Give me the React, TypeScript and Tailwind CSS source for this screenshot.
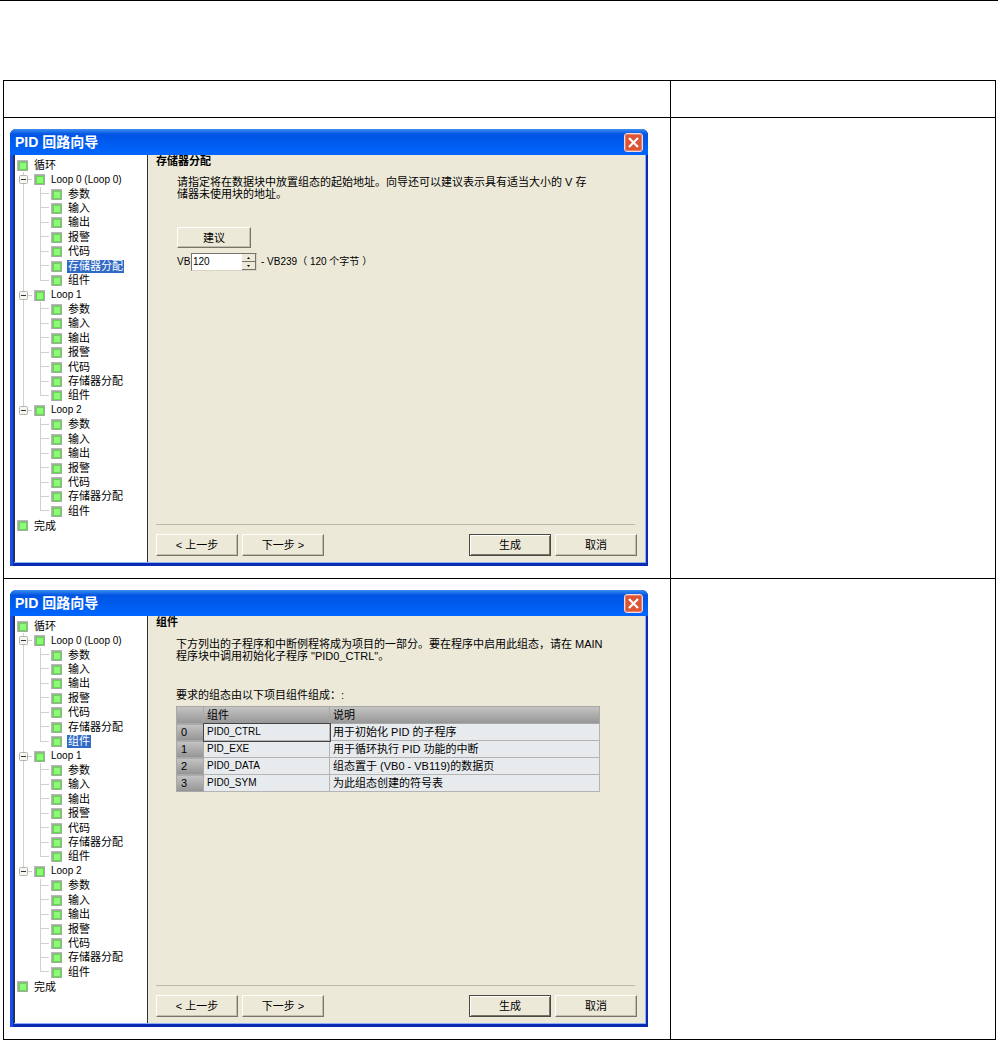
import { useState, type ReactNode } from 'react';
import clsx from 'clsx';

const LOOPS = ['Loop 0 (Loop 0)', 'Loop 1', 'Loop 2'];
const STEPS = ['参数', '输入', '输出', '报警', '代码', '存储器分配', '组件'];

const COMPONENTS = [
  { name: 'PID0_CTRL', text: '用于初始化 PID 的子程序' },
  { name: 'PID_EXE', text: '用于循环执行 PID 功能的中断' },
  { name: 'PID0_DATA', text: '组态置于 (VB0 - VB119)的数据页' },
  { name: 'PID0_SYM', text: '为此组态创建的符号表' },
];

function StatusIcon() {
  return (
    <span className="flex w-[17px] shrink-0 items-center pl-[2px]">
      <svg width="11" height="11" viewBox="0 0 11 11" aria-hidden="true">
        <rect width="11" height="11" fill="#b4bab4" />
        <rect x="1" y="1" width="10" height="10" fill="#a0aca0" />
        <rect x="2" y="2" width="8" height="8" fill="#5fdc48" />
        <rect x="3" y="3" width="6" height="6" fill="#8dfb78" />
      </svg>
    </span>
  );
}

// Expand box with the trunk line running through it
function ExpandBox({ last }: { last: boolean }) {
  return (
    <span className="flex w-[17px] shrink-0 items-center self-stretch pl-[4px]">
      <span className="flex h-full w-[9px] flex-col items-center">
        <span className="w-px flex-1 bg-[#d0d0d0]" />
        <button type="button" aria-label="折叠" className="block size-[9px]">
          <svg width="9" height="9" viewBox="0 0 9 9">
            <rect x="0.5" y="0.5" width="8" height="8" rx="1" fill="#f6f5f0" stroke="#b4b4ac" />
            <path d="M2 4.5h5" stroke="#333" />
          </svg>
        </button>
        <span className={clsx('w-px flex-1', !last && 'bg-[#d0d0d0]')} />
      </span>
      <span className="h-px flex-1 bg-[#d0d0d0]" />
    </span>
  );
}

function Trunk({ visible }: { visible: boolean }) {
  return (
    <span className="w-[17px] shrink-0 self-stretch">
      <span className={clsx('block h-full w-[9px]', visible && 'border-r border-[#d0d0d0]')} />
    </span>
  );
}

function Branch({ last }: { last: boolean }) {
  return (
    <span className="flex w-[17px] shrink-0 self-stretch">
      <span className={clsx('w-[9px] border-r border-[#d0d0d0]', last ? 'h-1/2' : 'h-full')} />
      <span className="h-1/2 flex-1 border-b border-[#d0d0d0]" />
    </span>
  );
}

function Tree({ selected }: { selected: string }) {
  return (
    <nav className="w-[134px] shrink-0 border-x border-[#333] bg-white pt-[3px] pb-[29px]">
      <ul className="grid h-[375px] auto-rows-fr">
        <li className="flex items-center">
          <StatusIcon />
          <span className="pl-[2px]">循环</span>
        </li>
        {LOOPS.map((loop, i) => {
          const lastLoop = i === LOOPS.length - 1;
          return [
            <li key={loop} className="flex items-center">
              <ExpandBox last={lastLoop} />
              <StatusIcon />
              <span className="pl-[2px] text-[10px] whitespace-nowrap">{loop}</span>
            </li>,
            ...STEPS.map((step, j) => (
              <li key={`${loop}-${step}`} className="flex items-center">
                <Trunk visible={!lastLoop} />
                <Branch last={j === STEPS.length - 1} />
                <StatusIcon />
                <span
                  className={clsx(
                    'ml-px px-px leading-[13px]',
                    i === 0 && step === selected && 'bg-[#316ac5] text-white',
                  )}
                >
                  {step}
                </span>
              </li>
            )),
          ];
        })}
        <li className="flex items-center">
          <StatusIcon />
          <span className="pl-[2px]">完成</span>
        </li>
      </ul>
    </nav>
  );
}

function Button({ children, primary, className }: { children: ReactNode; primary?: boolean; className?: string }) {
  return (
    <button
      type="button"
      className={clsx(
        'flex items-center justify-center border bg-[#ece9d8]',
        primary
          ? 'border-[#4a4a42] shadow-[inset_1px_1px_#fff,inset_-1px_-1px_#77756a]'
          : 'border-t-[#fffef8] border-r-[#77756a] border-b-[#77756a] border-l-[#fffef8] shadow-[inset_-1px_-1px_#c2bfae]',
        className ?? 'h-[22px] w-[82px]',
      )}
    >
      {children}
    </button>
  );
}

function Wizard({ selected, children }: { selected: string; children: ReactNode }) {
  return (
    <section className="w-full overflow-hidden rounded-t-[6px] bg-[#0a2bb4] text-[11px] leading-[12px]">
      <header className="flex h-[26px] items-center justify-between bg-linear-to-b from-[#3c8cf0] from-0% via-[#0054e3] via-20% to-[#0066ff] pr-[5px] pl-[5px]">
        <h2 className="text-[14px] leading-[18px] font-bold text-white">PID 回路向导</h2>
        <button type="button" aria-label="关闭" className="block size-[19px]">
          <svg width="19" height="19" viewBox="0 0 19 19">
            <rect x="0.5" y="0.5" width="18" height="18" rx="2.5" fill="#dc5534" stroke="#f4d8dc" />
            <rect x="1.5" y="1.5" width="16" height="16" rx="2" fill="none" stroke="#ea8468" />
            <path d="M5 5l9 9M14 5l-9 9" stroke="#fff" strokeWidth="2.2" />
          </svg>
        </button>
      </header>
      <div className="border-l-[3px] border-[#1650dc] pr-[2px] pb-[3px] pl-px">
        <div className="flex border-r border-b border-[#8fb0f4] bg-[#ece9d8]">
          <Tree selected={selected} />
          <div className="flex min-w-0 flex-1 flex-col px-[8px] pb-[6px]">
            <div className="flex-1">{children}</div>
            <div className="mr-[2px] border-t border-[#bdbaa9] shadow-[inset_0_1px_#fff]" />
            <footer className="flex gap-1 pt-[9px]">
              <Button>&lt; 上一步</Button>
              <Button>下一步 &gt;</Button>
              <div className="flex-1" />
              <Button primary>生成</Button>
              <Button>取消</Button>
            </footer>
          </div>
        </div>
      </div>
    </section>
  );
}

function MemoryPage() {
  const [start, setStart] = useState('120');

  return (
    <>
      <h3 className="font-bold">存储器分配</h3>
      <div className="pt-[9px] pl-[21px]">
        <p className="whitespace-nowrap">
          请指定将在数据块中放置组态的起始地址。向导还可以建议表示具有适当大小的 V 存
          <br />
          储器未使用块的地址。
        </p>
        <Button className="mt-[27px] h-[21px] w-[74px]">建议</Button>
        <div className="mt-[5px] flex items-center text-[10px]">
          <label htmlFor="start-address" className="w-[14px]">VB</label>
          <span className="flex h-[18px] w-[66px] border border-t-[#77756a] border-r-[#d8d5c4] border-b-[#d8d5c4] border-l-[#77756a] bg-white">
            <input
              id="start-address"
              value={start}
              onChange={(e) => setStart(e.target.value)}
              className="min-w-0 flex-1 px-px outline-none"
            />
            <span className="flex w-[14px] flex-col">
              <button
                type="button"
                aria-label="增加"
                onClick={() => setStart(String(Number(start) + 1))}
                className="flex flex-1 items-center justify-center border-r border-b border-[#77756a] bg-[#ece9d8]"
              >
                <svg width="3" height="2" viewBox="0 0 3 2"><path d="M0 2L1.5 0L3 2z" /></svg>
              </button>
              <button
                type="button"
                aria-label="减少"
                onClick={() => setStart(String(Number(start) - 1))}
                className="flex flex-1 items-center justify-center border-r border-b border-[#77756a] bg-[#ece9d8]"
              >
                <svg width="3" height="2" viewBox="0 0 3 2"><path d="M0 0L1.5 2L3 0z" /></svg>
              </button>
            </span>
          </span>
          <span className="pl-1 whitespace-nowrap">- VB239（ 120 个字节 ）</span>
        </div>
      </div>
    </>
  );
}

function ComponentsPage() {
  return (
    <>
      <h3 className="font-bold">组件</h3>
      <div className="pt-[10px] pl-[20px]">
        <p className="whitespace-nowrap">
          下方列出的子程序和中断例程将成为项目的一部分。要在程序中启用此组态，请在 MAIN
          <br />
          程序块中调用初始化子程序 "PID0_CTRL"。
        </p>
        <p className="mt-[27px]">要求的组态由以下项目组件组成：:</p>
        <table className="mt-[5px] w-[424px] table-fixed border-collapse text-left leading-[16px]">
          <thead>
            <tr className="bg-linear-to-b from-[#c4c4c4] to-[#949494]">
              <th className="w-[27px] border border-[#a8a8a8]" aria-label="序号" />
              <th className="w-[126px] border border-[#a8a8a8] px-[3px] font-normal">组件</th>
              <th className="border border-[#a8a8a8] px-[3px] font-normal">说明</th>
            </tr>
          </thead>
          <tbody>
            {COMPONENTS.map((item, i) => (
              <tr key={item.name}>
                <th className="border border-[#a8a8a8] bg-linear-to-b from-[#c4c4c4] to-[#949494] px-[4px] font-normal">
                  {i}
                </th>
                <td
                  className={clsx(
                    'border border-[#b4b4b4] bg-[#e8ebee] px-[3px] text-[10px]',
                    i === 0 && 'outline outline-[#444]',
                  )}
                >
                  {item.name}
                </td>
                <td className="border border-[#b4b4b4] bg-[#e8ebee] px-[3px]">{item.text}</td>
              </tr>
            ))}
          </tbody>
        </table>
      </div>
    </>
  );
}

function App() {
  return (
    <main className="border-t border-black bg-white pt-[79px] pr-[2px] pl-[3px] font-['Liberation_Sans','Noto_Sans_CJK_SC',sans-serif] text-black">
      <table className="w-full border-collapse">
        <thead>
          <tr className="h-[37px]">
            <th className="border border-black" />
            <th className="w-[325px] border border-black" />
          </tr>
        </thead>
        <tbody>
          <tr>
            <td className="border border-black pt-[11px] pr-[22px] pb-[12px] pl-[6px]">
              <Wizard selected="存储器分配">
                <MemoryPage />
              </Wizard>
            </td>
            <td className="border border-black" />
          </tr>
          <tr>
            <td className="border border-black pt-[11px] pr-[22px] pb-[12px] pl-[6px]">
              <Wizard selected="组件">
                <ComponentsPage />
              </Wizard>
            </td>
            <td className="border border-black" />
          </tr>
        </tbody>
      </table>
    </main>
  );
}

export default App;
